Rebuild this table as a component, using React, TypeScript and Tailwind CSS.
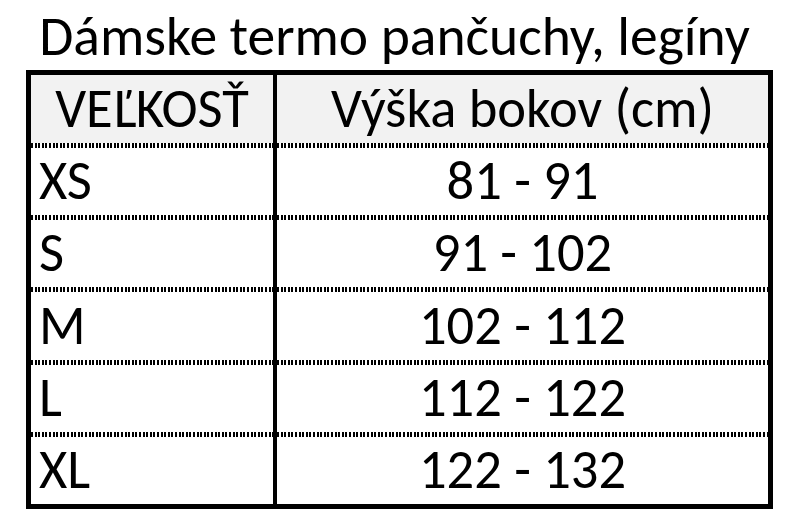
import React from "react";

const rows = [
  { size: "XS", range: "81 - 91" },
  { size: "S", range: "91 - 102" },
  { size: "M", range: "102 - 112" },
  { size: "L", range: "112 - 122" },
  { size: "XL", range: "122 - 132" },
];

function Dots() {
  return (
    <div className="h-[5px] w-full shrink-0 bg-[repeating-linear-gradient(90deg,#000_0px,#000_2px,transparent_2px,transparent_3.6px)]" />
  );
}

export default function App() {
  return (
    <div
      className="w-[797px] h-[531px] bg-white text-black overflow-hidden"
      style={{ fontFamily: "Carlito, Calibri, Lato, sans-serif" }}
    >
      <div className="h-[70px] flex items-end justify-center pb-[6px] pr-[8px]">
        <h1 className="text-[55.5px] leading-none font-normal">Dámske termo pančuchy, legíny</h1>
      </div>
      <div className="ml-[26px] w-[747px] h-[439px] border-[5px] border-black flex text-[54.5px] leading-none">
        <div className="w-[242px] flex flex-col">
          <div className="h-[68px] bg-[#f2f2f2] flex items-center justify-center">VEĽKOSŤ</div>
          {rows.map((r) => (
            <React.Fragment key={r.size}>
              <Dots />
              <div className="h-[67.5px] flex items-center pl-[8px]">{r.size}</div>
            </React.Fragment>
          ))}
        </div>
        <div className="w-[4px] bg-black" />
        <div className="flex-1 flex flex-col">
          <div className="h-[68px] bg-[#f2f2f2] flex items-center justify-center">Výška bokov (cm)</div>
          {rows.map((r) => (
            <React.Fragment key={r.size}>
              <Dots />
              <div className="h-[67.5px] flex items-center justify-center">{r.range}</div>
            </React.Fragment>
          ))}
        </div>
      </div>
    </div>
  );
}
